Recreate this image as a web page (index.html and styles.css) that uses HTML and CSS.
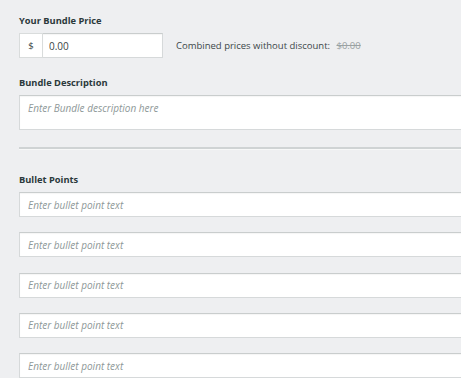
FILE: index.html
```html
<!DOCTYPE html>
<html lang="en">
<head>
    <meta charset="UTF-8">
    <meta name="viewport" content="width=device-width, initial-scale=1.0">
    <title>Bundle Details</title>
    <link rel="stylesheet" href="styles.css">
</head>
<body>
    <div class="panel">
        <label class="field-label" for="price">Your Bundle Price</label>
        <div class="price-row">
            <div class="price-group">
                <span class="addon">$</span>
                <input class="price-input" id="price" type="text" value="0.00">
            </div>
            <span class="combined">Combined prices without discount: <s class="old-price">$0.00</s></span>
        </div>

        <label class="field-label label-gap" for="desc">Bundle Description</label>
        <textarea class="desc-input" id="desc" placeholder="Enter Bundle description here"></textarea>

        <hr class="divider">

        <label class="field-label">Bullet Points</label>
        <div class="bullets">
            <input class="bullet-input" type="text" placeholder="Enter bullet point text">
            <input class="bullet-input" type="text" placeholder="Enter bullet point text">
            <input class="bullet-input" type="text" placeholder="Enter bullet point text">
            <input class="bullet-input" type="text" placeholder="Enter bullet point text">
            <input class="bullet-input" type="text" placeholder="Enter bullet point text">
        </div>
    </div>
</body>
</html>
```

FILE: styles.css
```css
body {
    margin: 0;
    background-color: #ffffff;
    font-family: "Open Sans", Lato, Arial, sans-serif;
    font-size: 9.5px;
    color: #2e3a3c;
}
.panel {
    width: 461px;
    height: 378px;
    box-sizing: border-box;
    padding: 15px 0 0 19px;
    background-color: #eeeff1;
    overflow: hidden;
    display: flex;
    flex-direction: column;
    align-items: flex-start;
}
.field-label {
    display: block;
    font-weight: bold;
    font-size: 9.3px;
    line-height: 12px;
    margin-bottom: 6px;
    color: #2b393b;
}
.label-gap {
    margin-top: 19px;
}
.price-row {
    display: flex;
    align-items: center;
    gap: 13px;
}
.price-group {
    display: flex;
    height: 25px;
}
.addon {
    width: 24px;
    box-sizing: border-box;
    border: 1px solid #d9dcdc;
    background-color: #ffffff;
    display: flex;
    align-items: center;
    justify-content: center;
    color: #3a4446;
}
.price-input,
.desc-input,
.bullet-input {
    font-family: inherit;
    font-size: 10px;
    box-sizing: border-box;
    border: 1px solid #d6d9da;
    border-top-color: #c9cdcd;
    background-color: #ffffff;
    box-shadow: inset 0 1px 1px rgba(0, 0, 0, 0.04);
    margin: 0;
    outline: none;
}
.price-input {
    width: 120px;
    height: 25px;
    padding: 0 6px;
    border-left: none;
    color: #3a4446;
}
.combined {
    color: #3c4749;
}
.old-price {
    color: #9aa2a3;
    margin-left: 4px;
}
.desc-input {
    width: 444px;
    height: 36px;
    padding: 5px 8px;
    resize: none;
}
.divider {
    width: 444px;
    height: 2px;
    margin: 17px 0 25px 0;
    border: none;
    background-color: #cfd3d4;
    box-shadow: 0 1px 0 #f7f8f8;
}
.bullets {
    display: flex;
    flex-direction: column;
    gap: 15.25px;
}
.bullet-input {
    width: 444px;
    height: 25px;
    padding: 0 8px;
}
.desc-input::placeholder,
.bullet-input::placeholder {
    color: #8e9898;
    font-style: italic;
}
```
